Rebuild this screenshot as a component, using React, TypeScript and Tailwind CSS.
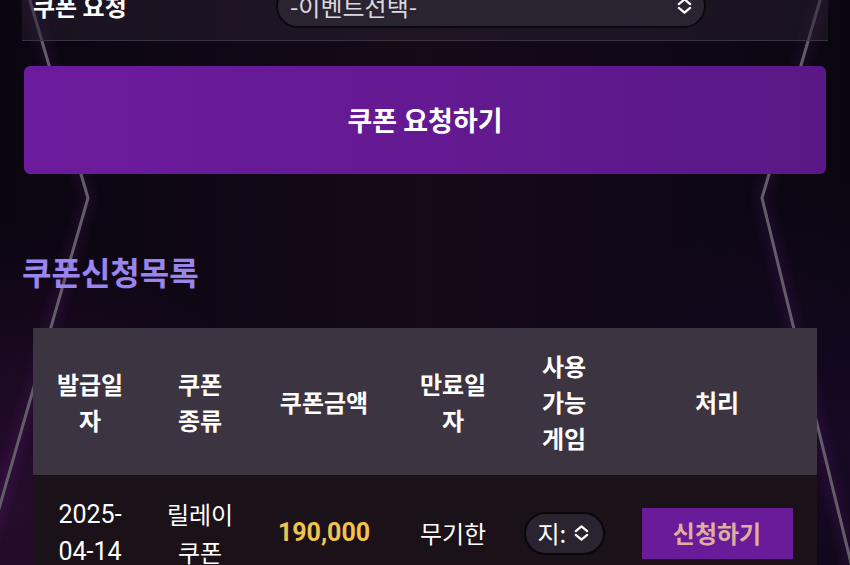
import React from "react";

function UpDown({ className }: { className?: string }) {
  return (
    <svg
      viewBox="0 0 18 20"
      className={className}
      fill="none"
      stroke="currentColor"
      strokeWidth={2.4}
      strokeLinecap="round"
      strokeLinejoin="round"
    >
      <path d="M3 8l6-5 6 5" />
      <path d="M3 12l6 5 6-5" />
    </svg>
  );
}

function Backdrop() {
  return (
    <>
      <div className="absolute inset-0 bg-[linear-gradient(90deg,#0a0510_0%,#110816_30%,#170a17_50%,#12081a_70%,#0a0610_100%)]" />
      <div className="absolute inset-0 bg-[radial-gradient(circle_at_0%_88%,rgba(110,30,120,0.3),transparent_28%),radial-gradient(circle_at_100%_80%,rgba(70,20,110,0.22),transparent_28%)]" />
      <svg className="absolute inset-0" width="850" height="565" viewBox="0 0 850 565">
        <defs>
          <filter id="glow" x="-50%" y="-50%" width="200%" height="200%">
            <feGaussianBlur stdDeviation="6" />
          </filter>
        </defs>
        <polyline points="24,-20 88,198 -10,540" fill="none" stroke="#7a2aa0" strokeWidth="10" opacity="0.18" filter="url(#glow)" />
        <polyline points="826,-20 762,198 860,600" fill="none" stroke="#7a2aa0" strokeWidth="10" opacity="0.18" filter="url(#glow)" />
        <polyline points="24,-20 88,198 -10,540" fill="none" stroke="#625d68" strokeWidth="3" strokeLinejoin="round" />
        <polyline points="826,-20 762,198 860,600" fill="none" stroke="#625d68" strokeWidth="3" strokeLinejoin="round" />
      </svg>
    </>
  );
}

const headers: string[][] = [
  ["발급일", "자"],
  ["쿠폰", "종류"],
  ["쿠폰금액"],
  ["만료일", "자"],
  ["사용", "가능", "게임"],
  ["처리"],
];

export default function App() {
  return (
    <div className="relative w-[850px] h-[565px] overflow-hidden bg-[#0e0711] font-['Noto_Sans_CJK_KR',sans-serif] text-white">
      <Backdrop />
      <div className="relative">
        {/* 쿠폰 요청 */}
        <div className="mt-[-29px] ml-[22px] w-[806px] h-[70px] flex items-center bg-[#2a1f30]/50 border-b border-[#3a3340]">
          <div className="w-[254px] pl-[11px] text-[24px] font-bold">쿠폰 요청</div>
          <div className="w-[430px] h-[44px] rounded-full bg-[#2a2330] border-2 border-[#0b080d] flex items-center justify-between pl-[12px] pr-[11px]">
            <span className="text-[24px] text-[#dcd8e0]">-이벤트선택-</span>
            <UpDown className="w-[17px] h-[20px] text-white" />
          </div>
        </div>

        <button className="mt-[25px] ml-[24px] w-[802px] h-[108px] rounded-[6px] bg-gradient-to-r from-[#6d1b9e] to-[#5a1886] flex items-center justify-center text-[27px] font-bold text-white">
          쿠폰 요청하기
        </button>

        <h2 className="mt-[77px] ml-[22px] text-[32px] leading-[40px] font-bold text-[#9a85ef]">
          쿠폰신청목록
        </h2>

        <div className="mt-[37px] ml-[33px] w-[784px]">
          <div className="grid grid-cols-[114px_106px_142px_116px_106px_200px] h-[147px] items-center bg-[#3c3440]">
            {headers.map((lines, i) => (
              <div key={i} className="text-center text-[24px] leading-[36px] font-bold">
                {lines.map((l, j) => (
                  <div key={j}>{l}</div>
                ))}
              </div>
            ))}
          </div>
          <div className="grid grid-cols-[114px_106px_142px_116px_106px_200px] h-[116px] items-center bg-[#1b1219]">
            <div className="text-center font-['Roboto',sans-serif] text-[25px] leading-[37px]">
              2025-
              <br />
              04-14
            </div>
            <div className="text-center text-[24px] leading-[38px]">
              릴레이
              <br />
              쿠폰
            </div>
            <div className="text-center font-['Roboto',sans-serif] text-[25px] font-bold text-[#f3c24f]">
              190,000
            </div>
            <div className="text-center text-[24px]">무기한</div>
            <div className="flex justify-center">
              <div className="w-[81px] h-[43px] rounded-full border-2 border-[#0a070b] bg-[#2a2430] flex items-center justify-between pl-[12px] pr-[13px]">
                <span className="text-[24px]">지:</span>
                <UpDown className="w-[17px] h-[20px] text-white" />
              </div>
            </div>
            <div className="flex justify-center">
              <button className="w-[151px] h-[51px] bg-[#6a1b9a] text-[#deb09c] text-[24px] font-semibold">
                신청하기
              </button>
            </div>
          </div>
        </div>
      </div>
    </div>
  );
}
